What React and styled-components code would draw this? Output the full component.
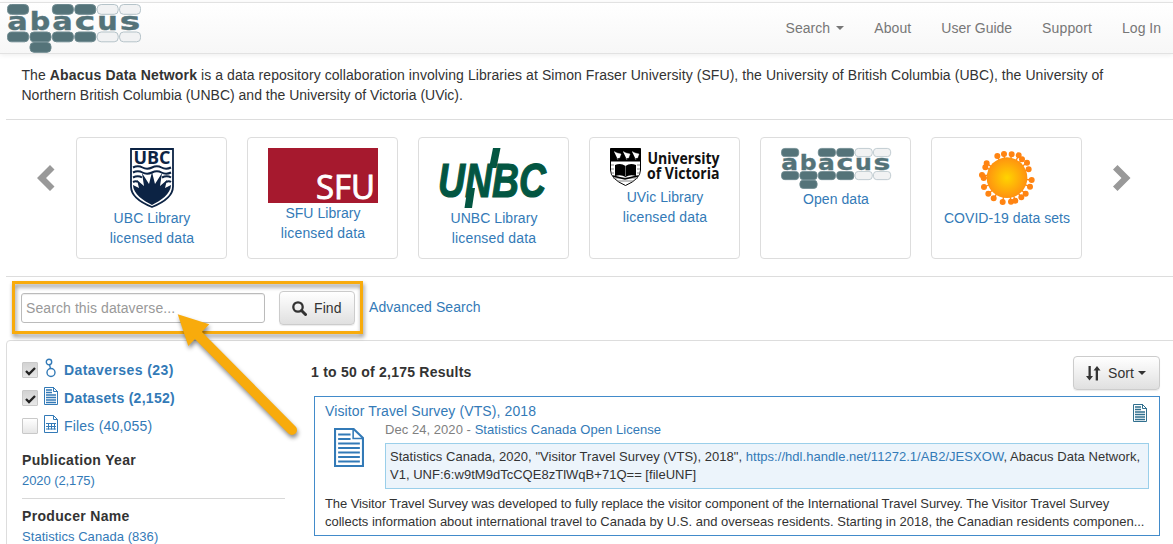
import React from "react";
import styled, { createGlobalStyle } from "styled-components";

const Global = createGlobalStyle`
  * { box-sizing: border-box; }
  html, body { margin: 0; background: #fff; }
  body { font: 14px/20px "Liberation Sans", Arial, sans-serif; color: #333; overflow: hidden; }
`;
const Page = styled.div`
  position: relative; width: 1173px; height: 544px; overflow: hidden; padding-top: 2px; background: #fff;
`;
const Navbar = styled.header`
  height: 52px; display: flex; justify-content: space-between; padding: 1px 12px 0 7px;
  border: solid #e2e2e2; border-width: 1px 0; background: linear-gradient(#fff, #f7f7f7);
  box-shadow: 0 1px 5px rgba(0, 0, 0, 0.075);
`;
const NavLinks = styled.nav`
  display: flex; gap: 30px; padding-top: 14px; color: #777;
`;
const Line = styled.span`
  display: block; width: max-content; white-space: pre; letter-spacing: ${(p) => p.$ls || 0}px;
`;
const NavLink = styled(Line)`
  display: flex; align-items: center; gap: 6px; height: 20px;
`;
const Name = styled.b`
  letter-spacing: 0.18px;
`;
const Caret = styled.i`
  width: 0; height: 0; border: solid transparent; border-width: 4px 4px 0; border-top-color: currentColor;
`;
const Intro = styled.section`
  margin-left: 6px; padding: 11px 0 14px 15.5px; height: 66px; border-bottom: 1px solid #ddd;
`;
const Carousel = styled.section`
  margin-left: 6px; height: 157px; padding: 17px 0 0 31px; display: flex; border-bottom: 1px solid #ddd;
`;
const Arrow = styled.svg`
  width: 18px; height: 26px; margin-top: 28px; fill: #999;
`;
const Cards = styled.div`
  display: flex; gap: 20px; margin: 0 31px 0 21px;
`;
const Card = styled.a`
  width: 151px; height: 122px; border: 1px solid #ddd; border-radius: 4px; padding-top: 10px;
  display: flex; flex-direction: column; align-items: center; color: #337ab7;
  svg { display: block; flex: none; overflow: visible; }
  span { position: relative; left: 0.5px; }
`;
const SearchRow = styled.section`
  height: 63px; padding: 14px 0 0 21px; display: flex; align-items: flex-start;
`;
const Input = styled.div`
  width: 244px; height: 30px; margin: 2px 14px 0 0; padding: 4px; border: 1px solid #bbb; border-radius: 3px;
  color: #999; box-shadow: inset 0 1px 1px rgba(0, 0, 0, 0.075);
`;
const Button = styled.div`
  width: ${(p) => p.$w}px; height: 34px; display: flex; align-items: center; padding-left: 12px;
  border: 1px solid #ccc; border-radius: 4px; background: linear-gradient(#fff, #e0e0e0);
  box-shadow: 0 1px 1px rgba(0, 0, 0, 0.08);
  svg { margin-right: 7px; }
  i { margin-left: 4px; }
`;
const Advanced = styled.div`
  margin: 6px 0 0 14px; color: #337ab7;
`;
const Main = styled.main`
  margin-left: 6px; width: 1180px; height: 260px; display: flex; border: 1px solid #ddd; border-radius: 4px;
`;
const Sidebar = styled.aside`
  width: 304px; padding: 15px 0 0 15px;
`;
const TypeRow = styled.div`
  height: 28px; display: flex; align-items: center; color: #337ab7;
  font-weight: ${(p) => (p.$bold ? 700 : 400)};
`;
const Check = styled.span`
  width: 16px; height: 16px; margin-right: 6px; border: 1px solid #c9c9c9; border-radius: 1px;
  background: ${(p) => (p.$on ? "linear-gradient(#d2d2d2,#e8e8e8)" : "linear-gradient(#fff,#e6e6e6)")};
  svg { display: block; }
`;
const TypeIcon = styled.span`
  width: 15px; margin: 0 5px 4px 0; svg { display: block; }
`;
const Facet = styled.div`
  width: 263px; padding-top: ${(p) => p.$top}px; height: ${(p) => p.$h}px; border-bottom: 1px solid #d8d8d8;
`;
const Strong = styled(Line)` font-weight: 700; `;
const FacetLink = styled(Line)` font-size: 13px; line-height: 21px; color: #337ab7; `;
const Results = styled.div` width: 850px; padding-top: 15px; `;
const ResultsHead = styled.div`
  height: 40px; display: flex; justify-content: space-between; padding-right: 1px;
  & > span { margin-top: 6px; }
`;
const Result = styled.article`
  margin-left: 3px; width: 846px; height: 140px; padding: 4px 10px 0; border: 1px solid #428bca; font-size: 13px; line-height: 18px;
`;
const ResultTop = styled.div`
  display: flex; justify-content: space-between; height: 19px; padding-right: 2px; font-size: 14px; line-height: 20px; color: #337ab7;
  svg { margin-top: 3px; }
`;
const ResultBody = styled.div`
  display: flex; height: 75px; padding-left: 9px;
  & > svg { margin: 8px 21px 0 0; flex: none; }
`;
const Meta = styled.div` color: #808080; height: 23px; padding-top: 1px; `;
const Citation = styled.div`
  width: 764px; height: 46px; padding: 4px; background: #ecf4fb; border: 1px solid #9acfea;
`;
const A = styled.span` color: #337ab7; `;
const Highlight = styled.div`
  position: absolute; left: 12px; top: 281px; width: 351px; height: 53px; border: 3px solid #f8ab0c;
  filter: drop-shadow(1px 3px 2px rgba(0, 0, 0, 0.45));
`;
const Pointer = styled.svg`
  position: absolute; left: 170px; top: 305px; filter: drop-shadow(1px 3px 2px rgba(0, 0, 0, 0.45));
`;

const pills = [[0, 0, 1], [2, 0, 1], [3, 0, 1], [4, 0, 0], [5, 0, 0], [0, 1, 1], [1, 1, 1], [2, 1, 1], [3, 1, 1], [4, 1, 0], [5, 1, 0], [1, 2, 1]];
const rowY = [0.5, 28, 38.5];
const AbacusLogo = ({ w, h }) => (
  <svg width={w} height={h} viewBox="0 0 134 49" preserveAspectRatio="none">
    {pills.map(([c, r, on]) => (
      <rect key={c + "-" + r} x={0.6 + c * 22.4} y={rowY[r]} width="21" height="9.8" rx="4" fill={on ? "#547379" : "#f1f2f3"} stroke={on ? "#6d898f" : "#b5c3c9"} strokeWidth="1" />
    ))}
    <g fill="#547379" stroke="#547379" strokeWidth=".4" fontFamily="DejaVu Sans" fontWeight="700" fontSize="24.5">
      {[..."abacus"].map((ch, i) => (
        <text key={i} x={0.2 + i * 22.5} y="26" textLength="20.5" lengthAdjust="spacingAndGlyphs">{ch}</text>
      ))}
    </g>
  </svg>
);
const UbcLogo = () => (
  <svg width="46" height="60" viewBox="0 0 46 60">
    <path d="M2 1h42v37.5C44 48 33 55 23 59 13 55 2 48 2 38.5z" fill="#fff" stroke="#0c2344" strokeWidth="1.8" />
    <text x="4.5" y="15.5" fontFamily="Open Sans" fontWeight="700" fontSize="17" fill="#0c2344" textLength="37" lengthAdjust="spacingAndGlyphs">UBC</text>
    <g fill="none" stroke="#0c2344" strokeWidth="2">
      <path d="M4 19.5q5-2.500 9.500 0t9.500 0 9.500 0 9.500 0" />
      <path d="M4 24.5q5-2.500 9.500 0t9.500 0 9.500 0 9.500 0" />
      <path d="M4 29.5q5-2.500 9 0M33 29.5q5-2.500 9 0M4 34q3-1.500 5 0M37 34q3-1.500 5 0" />
    </g>
    <path d="M4 37l6 3-2-8 7 6-2-13 7 11 3-12 3 12 7-11-2 13 7-6-2 8 6-3C42 46 31 53 23 57 15 53 4 46 4 37z" fill="#0c2344" />
  </svg>
);
const SfuLogo = () => (
  <svg width="110" height="55" viewBox="0 0 110 55">
    <rect width="110" height="55" fill="#a6192e" />
    <text x="48" y="51" fontFamily="Open Sans" fontWeight="500" fontSize="32" fill="#fff" stroke="#fff" strokeWidth=".9" textLength="59" lengthAdjust="spacingAndGlyphs">SFU</text>
  </svg>
);
const UnbcLogo = () => (
  <svg width="110" height="60" viewBox="0 0 110 60">
    <text x="-1" y="48.5" fill="#035642" stroke="#035642" strokeWidth="1.2" fontFamily="Liberation Sans" fontWeight="700" fontStyle="italic" fontSize="49" textLength="108" lengthAdjust="spacingAndGlyphs">UNBC</text>
    <path d="M28.500 40h7.500l-3 20h-7.500zM54 0h7.500l-4 20h-7.500z" fill="#035642" />
  </svg>
);
const UvicLogo = () => (
  <svg width="110" height="39" viewBox="0 0 110 39">
    <path d="M.5.500h30V22q0 9-15 15.500Q.5 31 .5 22z" fill="#fff" stroke="#000" />
    <path d="M.5.500h30v13H.5z" />
    <path d="M4 3.500l3 1.500 4 1-1.500 4H7l1 2M13 3.500l3 1.500 4 1-1.500 4H16l1 2M22 3.500l3 1.500 4 1-1.500 4H25l1 2" fill="#fff" stroke="#fff" strokeWidth=".4" />
    <path d="M5 17q6-2.500 10.500 1Q20 14.500 26 17v11q-6-2-10.500 1Q11 26 5 28z" />
    <path d="M15.500 18v10M1 17h3M27 17h3M1 21h3M27 21h3M1 25h3M27 25h3M3 30h25M7 33h17" fill="none" stroke="#777" strokeWidth=".9" />
    <path d="M3 28l4 1 8 2 8-2 5-1" fill="none" stroke="#000" strokeWidth="1.500" />
    <g fontFamily="Open Sans" fontWeight="700" fontSize="16" fill="#111">
      <text x="37.5" y="15.5" textLength="72" lengthAdjust="spacingAndGlyphs">University</text>
      <text x="37" y="31" textLength="72.5" lengthAdjust="spacingAndGlyphs">of Victoria</text>
    </g>
  </svg>
);
const knobs = [[234, 78], [254, 72], [277, 73], [298, 76], [308, 88], [323, 98], [328, 118], [337, 150], [332, 170], [319, 191], [306, 202], [288, 212], [275, 215], [250, 216], [223, 205], [207, 191], [194, 171], [188, 135], [193, 144], [198, 112], [202, 100]];
const VirusLogo = () => (
  <svg width="60" height="60" viewBox="173 54 180 180">
    <defs><radialGradient id="sun"><stop offset="0" stopColor="#ffd400" /><stop offset="1" stopColor="#ff9210" /></radialGradient></defs>
    <g stroke="#ff8412" strokeWidth="4" fill="#ff8412">
      {knobs.map(([x, y]) => <g key={x + "," + y}><path d={`M263 143L${x} ${y}`} /><circle cx={x} cy={y} r="7" /></g>)}
    </g>
    <circle cx="263" cy="143" r="61" fill="url(#sun)" />
  </svg>
);
const Doc = ({ w, h, color = "#337ab7" }) => (
  <svg width={w} height={h} viewBox="0 0 29 39" preserveAspectRatio="none">
    <path d="M1 1h18l9 9v28H1z" fill="#fff" stroke={color} strokeWidth="2" />
    <path d="M18.500 1v9.500H28" fill="none" stroke={color} strokeWidth="1.500" />
    <path d="M4 6.500h12M4 11h12M4 15.500h21M4 20h21M4 24.500h21M4 29h21M4 33.500h21" stroke={color} strokeWidth="2" />
  </svg>
);
const SmallDoc = ({ color = "#337ab7" }) => (
  <svg width="14" height="18" viewBox="0 0 14 18">
    <path d="M.5.500h9l4 4v13H.5z" fill="#fff" stroke={color} />
    <path d="M9.500 0v4.500H14" fill="none" stroke={color} />
    <path d="M2 3h6M2 5.500h6M2 8h10M2 10.500h10M2 13h10M2 15.500h10" stroke={color} strokeWidth="1.500" />
  </svg>
);
const Tick = () => <svg width="14" height="14" viewBox="0 0 14 14"><path d="M3 8l3 3 6-6" fill="none" stroke="#222" strokeWidth="2.300" /></svg>;

const cards = [
  [UbcLogo, ["UBC Library", "licensed data"]], [SfuLogo, ["SFU Library", "licensed data"]],
  [UnbcLogo, ["UNBC Library", "licensed data"]], [UvicLogo, ["UVic Library", "licensed data"]],
  [() => <AbacusLogo w={110} h={41} />, ["Open data"]], [VirusLogo, ["COVID-19 data sets"]],
];

export default function App() {
  return (
    <Page>
      <Global />
      <Navbar>
        <AbacusLogo w={134} h={49} />
        <NavLinks>
          <NavLink $ls={0.05}>Search<Caret /></NavLink><NavLink $ls={0.1}>About</NavLink><NavLink>User Guide</NavLink><NavLink $ls={0.13}>Support</NavLink><NavLink>Log In</NavLink>
        </NavLinks>
      </Navbar>
      <Intro>
        <Line $ls={0.066}>The <Name>Abacus Data Network</Name> is a data repository collaboration involving Libraries at Simon Fraser University (SFU), the University of British Columbia (UBC), the University of</Line>
        <Line>Northern British Columbia (UNBC) and the University of Victoria (UVic).</Line>
      </Intro>
      <Carousel>
        <Arrow viewBox="0 0 18 26"><path d="M0 13L13 0l4.500 4.500L9 13l8.500 8.500L13 26z" /></Arrow>
        <Cards>
          {cards.map(([Logo, lines], i) => <Card key={i}><Logo />{lines.map((t, n) => <Line key={t} $ls={n ? 0.14 : 0.05}>{t}</Line>)}</Card>)}
        </Cards>
        <Arrow viewBox="0 0 18 26"><path d="M17.500 13L4.500 0 0 4.500 8.500 13 0 21.500 4.500 26z" /></Arrow>
      </Carousel>
      <SearchRow>
        <Input><Line $ls={0.09}>Search this dataverse...</Line></Input>
        <Button $w={76}>
          <svg width="15" height="15" viewBox="0 0 15 15" fill="none" stroke="#333"><circle cx="6" cy="6" r="4.700" strokeWidth="2.300" /><path d="M9.500 9.500l4 4" strokeWidth="3" strokeLinecap="round" /></svg>
          <Line $ls={0.1}>Find</Line>
        </Button>
        <Advanced><Line $ls={0.08}>Advanced Search</Line></Advanced>
      </SearchRow>
      <Main>
        <Sidebar>
          <TypeRow $bold><Check $on><Tick /></Check><TypeIcon>
            <svg width="15" height="22" viewBox="0 0 15 22" fill="none" stroke="#337ab7" strokeWidth="1.400"><circle cx="5" cy="5" r="2.700" /><circle cx="7" cy="15.500" r="4" /><path d="M5.500 7.700l1 4" /></svg>
          </TypeIcon><Line $ls={0.42}>Dataverses (23)</Line></TypeRow>
          <TypeRow $bold><Check $on><Tick /></Check><TypeIcon><SmallDoc /></TypeIcon><Line $ls={0.27}>Datasets (2,152)</Line></TypeRow>
          <TypeRow><Check /><TypeIcon>
            <svg width="14" height="18" viewBox="0 0 14 18" fill="none" stroke="#337ab7"><path d="M.5.500h9l4 4v13H.5zM9.500.500v4h4M2 8.500h10M2 11.500h10M2 14h10M4.500 8v6.500M7.500 8v6.500M10.500 8v6.500" /></svg>
          </TypeIcon><Line $ls={0.2}>Files (40,055)</Line></TypeRow>
          <Facet $top={10} $h={59}><Strong $ls={0.34}>Publication Year</Strong><FacetLink $ls={-0.08}>2020 (2,175)</FacetLink></Facet>
          <Facet $top={7} $h={60}><Strong $ls={0.32}>Producer Name</Strong><FacetLink $ls={0.05}>Statistics Canada (836)</FacetLink></Facet>
        </Sidebar>
        <Results>
          <ResultsHead>
            <Strong $ls={0.24}>1 to 50 of 2,175 Results</Strong>
            <Button $w={87}>
              <svg width="15" height="15" viewBox="0 0 15 15" fill="#333"><path d="M2.500 0h2.300v10H7l-3.500 4.500L0 10h2.500zM9.700 14.500H12V4.500h2.500L11 0 7.500 4.500h2.200z" /></svg>
              <Line $ls={0.1}>Sort</Line><Caret />
            </Button>
          </ResultsHead>
          <Result>
            <ResultTop><Line $ls={0.11}>Visitor Travel Survey (VTS), 2018</Line><SmallDoc color="#31708f" /></ResultTop>
            <ResultBody>
              <Doc w={30} h={39} />
              <div>
                <Meta><Line $ls={0.05}>Dec 24, 2020 - <A>Statistics Canada Open License</A></Line></Meta>
                <Citation>
                  <Line $ls={0.034}>Statistics Canada, 2020, "Visitor Travel Survey (VTS), 2018", <A>https://hdl.handle.net/11272.1/AB2/JESXOW</A>, Abacus Data Network,</Line>
                  <Line $ls={0.02}>V1, UNF:6:w9tM9dTcCQE8zTlWqB+71Q== [fileUNF]</Line>
                </Citation>
              </div>
            </ResultBody>
            <Line $ls={-0.08}>The Visitor Travel Survey was developed to fully replace the visitor component of the International Travel Survey. The Visitor Travel Survey</Line>
            <Line>collects information about international travel to Canada by U.S. and overseas residents. Starting in 2018, the Canadian residents componen...</Line>
          </Result>
        </Results>
      </Main>
      <Highlight />
      <Pointer width="140" height="140" viewBox="170 305 140 140" fill="#f8ab0c">
        <path d="M177.700 314.300L209.300 324.300 188.300 346z" /><path d="M195 332L292 430" stroke="#f8ab0c" strokeWidth="10" strokeLinecap="round" />
      </Pointer>
    </Page>
  );
}
